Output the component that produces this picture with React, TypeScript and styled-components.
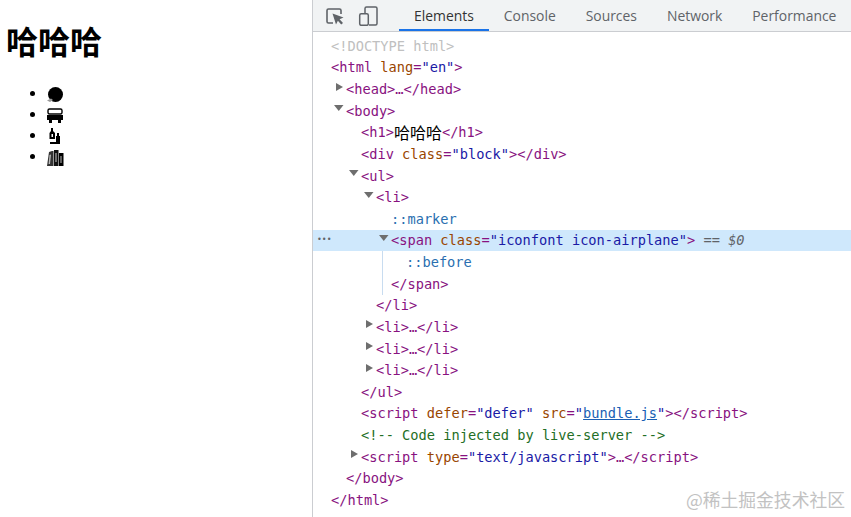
import React from 'react';
import styled, { createGlobalStyle } from 'styled-components';

const GlobalStyle = createGlobalStyle`
  html, body {
    margin: 0;
    padding: 0;
    background: #ffffff;
  }
`;

const InspectIcon = () => (
  <svg width="20" height="20" viewBox="0 0 20 20" fill="none">
    <path d="M8 17H3.5A1.5 1.5 0 0 1 2 15.5V4.5A1.5 1.5 0 0 1 3.5 3h11A1.5 1.5 0 0 1 16 4.5V8" stroke="#5f6368" strokeWidth="1.6" />
    <path d="M7.5 7.5L18.5 11.5L14.6 13.2L18 17L16.2 18.6L12.9 14.8L11 18.5Z" fill="#5f6368" />
  </svg>
);

const DeviceIcon = () => (
  <svg width="20" height="20" viewBox="0 0 20 20" fill="none">
    <path d="M7 7V2.5A1.5 1.5 0 0 1 8.5 1h9A1.5 1.5 0 0 1 19 2.5v15a1.5 1.5 0 0 1-1.5 1.5H11" stroke="#5f6368" strokeWidth="1.5" />
    <rect x="1.7" y="7.7" width="8.6" height="11.6" rx="1.5" stroke="#5f6368" strokeWidth="1.5" />
  </svg>
);

const PlaneIcon = () => (
  <svg width="18" height="18" viewBox="0 0 18 18">
    <circle cx="9.5" cy="8.5" r="7.5" fill="#000" />
    <path d="M1 14.5L5 12.5L7 14L4 16Z" fill="#999" />
  </svg>
);

const BusIcon = () => (
  <svg width="18" height="18" viewBox="0 0 18 18" fill="none">
    <rect x="2" y="2" width="14" height="5" rx="1.5" stroke="#000" strokeWidth="1.4" />
    <rect x="1" y="8" width="16" height="5" fill="#000" />
    <rect x="3" y="13" width="3" height="3" fill="#000" />
    <rect x="12" y="13" width="3" height="3" fill="#000" />
  </svg>
);

const LabIcon = () => (
  <svg width="18" height="18" viewBox="0 0 18 18">
    <path d="M5 0h2v3l2 2v6H3.5V5l1.5-2Z" fill="#000" />
    <path d="M10 8h1V5h2v3h1v8H4v-2h6Z" fill="#000" />
    <rect x="5.5" y="6" width="1.5" height="3" fill="#fff" />
  </svg>
);

const BooksIcon = () => (
  <svg width="18" height="18" viewBox="0 0 18 18">
    <path d="M3 3L6 2L7.5 2V17H1Z" fill="#333" />
    <path d="M3.5 6L5 5.5L4 15L2.6 15Z" fill="#bbb" />
    <rect x="8" y="1" width="4.5" height="16" fill="#111" />
    <rect x="9.5" y="4" width="1" height="9" fill="#ccc" />
    <rect x="13" y="4" width="4.5" height="13" fill="#000" />
    <rect x="14.5" y="7" width="1" height="7" fill="#bbb" />
  </svg>
);

const Tag = styled.span`
  color: #881280;
`;

const AttrName = styled.span`
  color: #994500;
`;

const AttrValue = styled.span`
  color: #1a1aa6;
`;

const Pseudo = styled.span`
  color: #2a6fb0;
`;

const Doctype = styled.span`
  color: #c0c0c0;
`;

const Comment = styled.span`
  color: #236e25;
`;

const SourceLink = styled.span`
  color: #1a5fb4;
  text-decoration: underline;
`;

const Plain = styled.span`
  color: #000000;
  font-family: "Noto Sans CJK SC", sans-serif;
  font-size: 16px;
`;

const Hint = styled.span`
  color: #5f6368;
  font-style: italic;
`;

const Arrow = ({ open }: { open?: boolean }) => (
  <ArrowBox>
    <svg width="10" height="10" viewBox="0 0 10 10">
      {open ? <path d="M0 2h9.5L4.75 8Z" fill="#6e6e6e" /> : <path d="M2 1v8l7-4Z" fill="#6e6e6e" />}
    </svg>
  </ArrowBox>
);

const App = () => {
  return (
    <Page>
      <GlobalStyle />
      <Viewport>
        <Heading>哈哈哈</Heading>
        <IconList>
          <IconItem>
            <PlaneIcon />
          </IconItem>
          <IconItem>
            <BusIcon />
          </IconItem>
          <IconItem>
            <LabIcon />
          </IconItem>
          <IconItem>
            <BooksIcon />
          </IconItem>
        </IconList>
      </Viewport>
      <Devtools>
        <Toolbar>
          <ToolIcons>
            <InspectIcon />
            <DeviceIcon />
          </ToolIcons>
          <Separator />
          <Tab $active>Elements</Tab>
          <Tab>Console</Tab>
          <Tab>Sources</Tab>
          <Tab>Network</Tab>
          <Tab>Performance</Tab>
        </Toolbar>
        <Tree>
          <Row $indent={18}>
            <Doctype>&lt;!DOCTYPE html&gt;</Doctype>
          </Row>
          <Row $indent={18}>
            <Tag>&lt;html</Tag>
            <AttrName>&nbsp;lang</AttrName>
            <Tag>=</Tag>
            <AttrValue>"en"</AttrValue>
            <Tag>&gt;</Tag>
          </Row>
          <Row $indent={21}>
            <Arrow />
            <Tag>&lt;head&gt;…&lt;/head&gt;</Tag>
          </Row>
          <Row $indent={21}>
            <Arrow open />
            <Tag>&lt;body&gt;</Tag>
          </Row>
          <Row $indent={48}>
            <Tag>&lt;h1&gt;</Tag>
            <Plain>哈哈哈</Plain>
            <Tag>&lt;/h1&gt;</Tag>
          </Row>
          <Row $indent={48}>
            <Tag>&lt;div</Tag>
            <AttrName>&nbsp;class</AttrName>
            <Tag>=</Tag>
            <AttrValue>"block"</AttrValue>
            <Tag>&gt;&lt;/div&gt;</Tag>
          </Row>
          <Row $indent={36}>
            <Arrow open />
            <Tag>&lt;ul&gt;</Tag>
          </Row>
          <Row $indent={51}>
            <Arrow open />
            <Tag>&lt;li&gt;</Tag>
          </Row>
          <Row $indent={78}>
            <Pseudo>::marker</Pseudo>
          </Row>
          <Row $indent={66} $selected>
            <Dots>•••</Dots>
            <Arrow open />
            <Tag>&lt;span</Tag>
            <AttrName>&nbsp;class</AttrName>
            <Tag>=</Tag>
            <AttrValue>"iconfont icon-airplane"</AttrValue>
            <Tag>&gt;</Tag>
            <Hint>&nbsp;== $0</Hint>
          </Row>
          <Guide>
            <Row $indent={23}>
              <Pseudo>::before</Pseudo>
            </Row>
            <Row $indent={8}>
              <Tag>&lt;/span&gt;</Tag>
            </Row>
          </Guide>
          <Row $indent={63}>
            <Tag>&lt;/li&gt;</Tag>
          </Row>
          <Row $indent={51}>
            <Arrow />
            <Tag>&lt;li&gt;…&lt;/li&gt;</Tag>
          </Row>
          <Row $indent={51}>
            <Arrow />
            <Tag>&lt;li&gt;…&lt;/li&gt;</Tag>
          </Row>
          <Row $indent={51}>
            <Arrow />
            <Tag>&lt;li&gt;…&lt;/li&gt;</Tag>
          </Row>
          <Row $indent={48}>
            <Tag>&lt;/ul&gt;</Tag>
          </Row>
          <Row $indent={48}>
            <Tag>&lt;script</Tag>
            <AttrName>&nbsp;defer</AttrName>
            <Tag>=</Tag>
            <AttrValue>"defer"</AttrValue>
            <AttrName>&nbsp;src</AttrName>
            <Tag>=</Tag>
            <AttrValue>"</AttrValue>
            <SourceLink>bundle.js</SourceLink>
            <AttrValue>"</AttrValue>
            <Tag>&gt;&lt;/script&gt;</Tag>
          </Row>
          <Row $indent={48}>
            <Comment>&lt;!-- Code injected by live-server --&gt;</Comment>
          </Row>
          <Row $indent={36}>
            <Arrow />
            <Tag>&lt;script</Tag>
            <AttrName>&nbsp;type</AttrName>
            <Tag>=</Tag>
            <AttrValue>"text/javascript"</AttrValue>
            <Tag>&gt;…&lt;/script&gt;</Tag>
          </Row>
          <Row $indent={33}>
            <Tag>&lt;/body&gt;</Tag>
          </Row>
          <Row $indent={18}>
            <Tag>&lt;/html&gt;</Tag>
          </Row>
        </Tree>
      </Devtools>
      <Watermark>@稀土掘金技术社区</Watermark>
    </Page>
  );
};

const Page = styled.div`
  position: relative;
  width: 851px;
  height: 517px;
  display: flex;
  overflow: hidden;
`;

const Viewport = styled.div`
  width: 312px;
  flex: none;
  padding: 22px 6px 0;
  box-sizing: border-box;
  color: #000000;
`;

const Heading = styled.h1`
  margin: 0;
  font-family: "Noto Sans CJK SC", sans-serif;
  font-size: 32px;
  font-weight: 700;
  line-height: 37px;
`;

const IconList = styled.ul`
  margin: 25px 0 0;
  padding-left: 40px;
  font-family: "Liberation Sans", sans-serif;
  font-size: 16px;
`;

const IconItem = styled.li`
  height: 21px;

  svg {
    display: block;
    padding-top: 2px;
  }
`;

const Devtools = styled.div`
  flex: 1;
  min-width: 0;
  border-left: 1px solid #cbcdd1;
  display: flex;
  flex-direction: column;
`;

const Toolbar = styled.div`
  height: 31px;
  flex: none;
  display: flex;
  align-items: stretch;
  background: #f1f3f4;
  border-bottom: 1px solid #cbcdd1;
`;

const ToolIcons = styled.div`
  display: flex;
  align-items: center;
  gap: 13px;
  padding-left: 12px;
  width: 65px;
  box-sizing: border-box;
`;

const Separator = styled.div`
  width: 1px;
  height: 20px;
  margin: 5px 7px 0 14px;
  background: #cbcdd1;
`;

const Tab = styled.div<{ $active?: boolean }>`
  display: flex;
  align-items: center;
  padding: 0 15px;
  font-family: "Open Sans", sans-serif;
  font-size: 13.9px;
  color: ${(p) => (p.$active ? '#333333' : '#5f6368')};
  box-shadow: ${(p) => (p.$active ? 'inset 0 -2px 0 #1a73e8' : 'none')};
  white-space: nowrap;
`;

const Tree = styled.div`
  padding-top: 3px;
  font-family: "DejaVu Sans Mono", monospace;
  font-size: 13.67px;
`;

const Row = styled.div<{ $indent: number; $selected?: boolean }>`
  position: relative;
  height: 21.63px;
  display: flex;
  align-items: center;
  padding-left: ${(p) => p.$indent}px;
  background: ${(p) => (p.$selected ? '#cfe8fc' : 'transparent')};
  white-space: pre;
`;

const ArrowBox = styled.span`
  width: 12px;
  flex: none;
  display: flex;
  margin-top: -5px;
`;

const Guide = styled.div`
  margin-left: 69px;
  border-left: 1px solid #c8dcf0;
`;

const Dots = styled.span`
  position: absolute;
  left: 4px;
  top: 5px;
  font-size: 8px;
  letter-spacing: 0;
  color: #5f6368;
`;

const Watermark = styled.div`
  position: absolute;
  right: 6px;
  bottom: 5px;
  font-family: "Noto Sans CJK SC", sans-serif;
  font-size: 17.8px;
  color: #c2c2c2;
`;

export default App;
